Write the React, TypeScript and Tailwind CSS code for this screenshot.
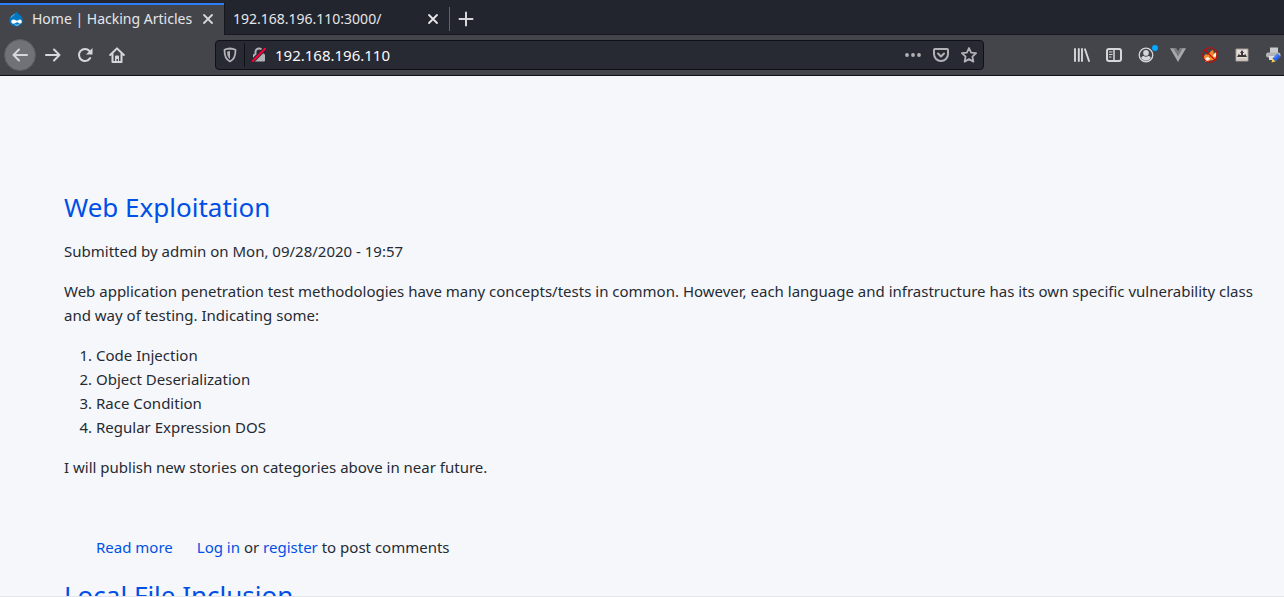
import type { ReactNode } from "react";

type IconProps = { children: ReactNode; className?: string };

function Icon({ children, className = "" }: IconProps) {
  return (
    <svg viewBox="0 0 16 16" aria-hidden="true" className={`block size-4 shrink-0 ${className}`}>
      {children}
    </svg>
  );
}

const stroke = {
  fill: "none",
  stroke: "currentColor",
  strokeWidth: 2,
  strokeLinecap: "round" as const,
  strokeLinejoin: "round" as const,
};

const BackIcon = () => (
  <Icon><path {...stroke} d="M15 8H1.500M7 2.500 1.500 8 7 13.500" /></Icon>
);
const ForwardIcon = () => (
  <Icon><path {...stroke} d="M1 8h13.500M9 2.500 14.500 8 9 13.500" /></Icon>
);
const ReloadIcon = () => (
  <Icon>
    <path {...stroke} d="M13.200 11A6 6 0 1 1 12.500 4" />
    <path fill="currentColor" d="M15.500 1v6.500H9z" />
  </Icon>
);
const HomeIcon = () => (
  <Icon>
    <path {...stroke} d="M1.200 8 8 1.400 14.800 8" />
    <path {...stroke} d="M3.500 7v8h9V7" />
    <path fill="currentColor" d="M6 9.500a1 1 0 0 1 1-1h2a1 1 0 0 1 1 1V15H9v-3H7.500v3H6z" />
  </Icon>
);
const CloseIcon = () => (
  <Icon><path {...stroke} strokeWidth={1.800} d="m4 4 8 8m0-8-8 8" /></Icon>
);
const PlusIcon = () => (
  <Icon><path {...stroke} d="M8 1.500v13M1.500 8h13" /></Icon>
);
const ShieldIcon = () => (
  <Icon>
    <path {...stroke} strokeWidth={1.800} d="M8 1.500c2 .1 4 .6 5.500 1.300C13.600 8.500 12.500 12.500 8 14.500 3.500 12.500 2.400 8.500 2.500 2.800 4 2.100 6 1.600 8 1.500Z" />
    <path fill="currentColor" d="M8 4v8C5.800 10.500 5.100 8 5.100 4.700 6 4.300 7 4.100 8 4Z" />
  </Icon>
);
const InsecureIcon = () => (
  <Icon>
    <path {...stroke} d="M4.500 8V5a3.500 3.500 0 0 1 7 0v3" />
    <rect x="2" y="7" width="12" height="7.500" rx="1" fill="currentColor" />
    <path d="M1.500 14.200 14 1.700" stroke="#272933" strokeWidth="4" />
    <path d="M1.800 14 14 1.800" stroke="#ff0039" strokeWidth="2" strokeLinecap="round" />
  </Icon>
);
const DotsIcon = () => (
  <Icon>
    <circle cx="2" cy="8" r="1.900" fill="currentColor" />
    <circle cx="8" cy="8" r="1.900" fill="currentColor" />
    <circle cx="14" cy="8" r="1.900" fill="currentColor" />
  </Icon>
);
const PocketIcon = () => (
  <Icon>
    <path {...stroke} d="M2 2h12a1 1 0 0 1 1 1v4A7 7 0 0 1 1 7V3a1 1 0 0 1 1-1Z" />
    <path {...stroke} d="m5 6.500 3 3 3-3" />
  </Icon>
);
const StarIcon = () => (
  <Icon>
    <path {...stroke} strokeWidth={1.800} d="m8 1 2.100 4.600 5 .6-3.700 3.400 1 5L8 12.100l-4.400 2.500 1-5L.9 6.200l5-.6z" />
  </Icon>
);
const LibraryIcon = () => (
  <Icon>
    <path {...stroke} d="M1 2v12M4.800 2v12M8 2v12M11 2.300l4 11.700" strokeWidth={1.900} />
  </Icon>
);
const SidebarIcon = () => (
  <Icon>
    <rect x="1" y="2" width="14" height="12" rx="2" {...stroke} />
    <path d="M8 2v12" stroke="currentColor" strokeWidth="1.500" />
    <path d="M3 5h3.500M3 7.500h3.500M3 10h2.500" stroke="currentColor" strokeWidth="1.200" />
  </Icon>
);
const AccountIcon = () => (
  <Icon>
    <circle cx="8" cy="8" r="6.800" fill="none" stroke="currentColor" strokeWidth="1.300" />
    <circle cx="8" cy="5.900" r="2.800" fill="currentColor" />
    <path fill="currentColor" d="M3.200 11c.5-1.500 1.500-2 2.500-2 1.500 1 3.100 1 4.600 0 1 0 2 .5 2.500 2-2.500 3.500-7.100 3.500-9.600 0Z" />
  </Icon>
);
const VueIcon = () => (
  <Icon>
    <path fill="#a7a8a9" d="M0 1.200h6L8 4.800l2-3.600h6L8 15z" />
    <path fill="#77797c" d="M3.200 1.200H6L8 4.800l2-3.600h2.800L8 9.500z" />
  </Icon>
);
const FoxIcon = () => (
  <Icon>
    <path fill="#f58a2b" d="m2 9 2-2 2 1 3-4 2-1 1 3 2.500-1-.5 6-2 2-4 .5-2 1.500H3l1-2-2-1z" />
    <path fill="#fff6e6" d="m3.500 11 2.500-1 2.500 1.500-2 1.500-2 1.500L3 14zM12 7l2.500-1.500-.7 4-1.800.5-1-1z" />
    <path fill="#6c3922" d="m7 9.500 1.500.5-1 .8zM10.500 6l1.500-.7-.7 1.500z" />
    <circle cx="8" cy="8" r="7.200" fill="none" stroke="#c90808" strokeWidth="1.100" />
    <path d="m3 3 10 10" stroke="#c90808" strokeWidth="1.100" />
  </Icon>
);
const BadgeIcon = () => (
  <Icon>
    <rect x="1.500" y="1.500" width="13" height="13" rx="1" fill="#a89b94" />
    <rect x="2.500" y="2.500" width="11" height="11" fill="#e5dfda" />
    <path fill="#3b3938" d="m8 3 2 3H9v2h1.500l.5-1.500L13 10H3l2-3.500L5.500 8H7V6H6z" />
    <path d="M3.500 12h9" stroke="#bfb4ae" />
  </Icon>
);
const PrinterIcon = () => (
  <Icon>
    <path fill="#c9cbcd" d="M4 .5h8V6H4z" />
    <rect x="0" y="5.500" width="14.500" height="5" rx="2" fill="#b2b4b6" />
    <path fill="#e0e0e0" d="M3 9h8v4H3z" />
    <path d="m8 13 5-5" stroke="#2e64e9" strokeWidth="4.500" />
    <path d="m8.500 11 4-4" stroke="#6e9cff" />
    <path fill="#f3cf51" d="m6.400 11.400 3.200 3.200-4.100.9z" />
  </Icon>
);
const DrupalIcon = () => (
  <Icon>
    <path fill="#0077c0" d="M8.500 .5c.8 2 2.500 2.700 4 4 4.500 4.300 1.500 11-4.500 11S-.8 9 3.200 5.100C4.700 3.600 7.500 2.500 8.500 .5Z" />
    <path fill="#73b9e5" d="M7 2.500c-.2 1.200-1 1.900-2.300 2.700-1 .7-1.600 1.300-2 2C2.600 5.500 4 4.800 5 4Z" />
    <path fill="#fff" d="M5.500 8.500c2 0 2.700 1.300 3.500 1.300s1.500-1.300 3-1.300c2 0 2.500 3.500.7 4-1.500.4-2.500-1.300-3.500-1.300s-2 1.500-3.700 1.500c-3 0-3-4.200 0-4.200ZM7 13.200c1 .8 3 .8 4 0l.3.6c-1.300 1-3.300 1-4.600 0z" />
  </Icon>
);

function ToolButton({ label, children, className = "" }: { label: string; children: ReactNode; className?: string }) {
  return (
    <button type="button" aria-label={label} className={`flex size-8 shrink-0 items-center justify-center ${className}`}>
      {children}
    </button>
  );
}

function TabBar() {
  return (
    <div className="flex h-[35px] bg-[#23252e] pt-[3px] text-sm">
      <div className="flex w-56 shrink-0 items-center border-t-2 border-[#2e7cf6] bg-[#43454b] px-2 pb-0.5">
        <button type="button" className="flex min-w-0 flex-1 items-center gap-2 text-[#e6e6e8]">
          <DrupalIcon />
          <span className="whitespace-nowrap">Home | Hacking Articles</span>
        </button>
        <button type="button" aria-label="Close Home tab"><CloseIcon /></button>
      </div>
      <div className="flex w-[225px] shrink-0 items-center border-b border-l border-[#17181e] px-2 text-[#e6e6e8]">
        <button type="button" className="flex-1 text-left">192.168.196.110:3000/</button>
        <button type="button" aria-label="Close 192.168.196.110:3000 tab"><CloseIcon /></button>
      </div>
      <div className="flex flex-1 items-center border-b border-[#17181e]">
        <div className="h-6 w-px bg-[#606268]" />
        <ToolButton label="Open a new tab"><PlusIcon /></ToolButton>
      </div>
    </div>
  );
}

function NavBar() {
  return (
    <div className="flex h-[41px] items-center overflow-hidden border-b border-[#101116] bg-[#43454b] pl-1">
      <ToolButton label="Back" className="rounded-full border border-[#5a5c62] bg-[#717277]"><BackIcon /></ToolButton>
      <div className="ml-px flex">
        <ToolButton label="Forward"><ForwardIcon /></ToolButton>
        <ToolButton label="Reload"><ReloadIcon /></ToolButton>
        <ToolButton label="Home"><HomeIcon /></ToolButton>
      </div>
      <div className="ml-[82px] flex h-[30px] min-w-0 flex-1 items-center rounded border border-[#101116] bg-[#272933] px-1.5 text-[#b2b3b7]">
        <button type="button" aria-label="Tracking protection"><ShieldIcon /></button>
        <div className="ml-1.5 h-6 w-px bg-[#101116]" />
        <button type="button" aria-label="Connection is not secure" className="ml-1.5"><InsecureIcon /></button>
        <input aria-label="Address" defaultValue="192.168.196.110" className="ml-2 min-w-0 flex-1 bg-transparent text-[#f9f9fa] outline-none" />
        <div className="flex gap-3">
          <button type="button" aria-label="Page actions"><DotsIcon /></button>
          <button type="button" aria-label="Save to Pocket"><PocketIcon /></button>
          <button type="button" aria-label="Bookmark this page"><StarIcon /></button>
        </div>
      </div>
      <div className="-mr-1.5 ml-[82px] flex shrink-0">
        <ToolButton label="Library"><LibraryIcon /></ToolButton>
        <ToolButton label="Sidebars"><SidebarIcon /></ToolButton>
        <ToolButton label="Account" className="relative">
          <AccountIcon />
          <span className="absolute top-1.5 right-1 size-1.5 rounded-full bg-[#00a8ff]" />
        </ToolButton>
        <ToolButton label="Vue devtools"><VueIcon /></ToolButton>
        <ToolButton label="Proxy switcher"><FoxIcon /></ToolButton>
        <ToolButton label="Extension"><BadgeIcon /></ToolButton>
        <ToolButton label="Print editor"><PrinterIcon /></ToolButton>
      </div>
    </div>
  );
}

const topics = ["Code Injection", "Object Deserialization", "Race Condition", "Regular Expression DOS"];

export default function App() {
  return (
    <div className="flex h-screen flex-col overflow-hidden bg-[#f6f7fb] font-['Noto_Sans',sans-serif]">
      <header className="shrink-0 text-[15px] text-[#d7d7db]">
        <TabBar />
        <NavBar />
      </header>
      <main className="min-h-0 flex-1 overflow-hidden border-b border-[#e4e5e8] pt-[115px] pr-4 pl-16 text-[15px] leading-6 text-[#252b33]">
        <article>
          <h2 className="text-[26px] leading-8 text-[#0050e6]"><a href="#web-exploitation">Web Exploitation</a></h2>
          <p className="mt-4">Submitted by admin on Mon, 09/28/2020 - 19:57</p>
          <p className="mt-4">
            Web application penetration test methodologies have many concepts/tests in common. However, each language and infrastructure has its own specific vulnerability class and way of testing. Indicating some:
          </p>
          <ol className="mt-4 list-decimal pl-8">
            {topics.map((topic) => <li key={topic}>{topic}</li>)}
          </ol>
          <p className="mt-4">I will publish new stories on categories above in near future.</p>
          <div className="mt-14 flex gap-6 pl-8">
            <a href="#read-more" className="text-[#0050e6]">Read more</a>
            <p>
              <a href="#login" className="text-[#0050e6]">Log in</a> or <a href="#register" className="text-[#0050e6]">register</a> to post comments
            </p>
          </div>
        </article>
        <article className="mt-5">
          <h2 className="text-[26px] leading-8 text-[#0050e6]"><a href="#local-file-inclusion">Local File Inclusion</a></h2>
        </article>
      </main>
    </div>
  );
}
